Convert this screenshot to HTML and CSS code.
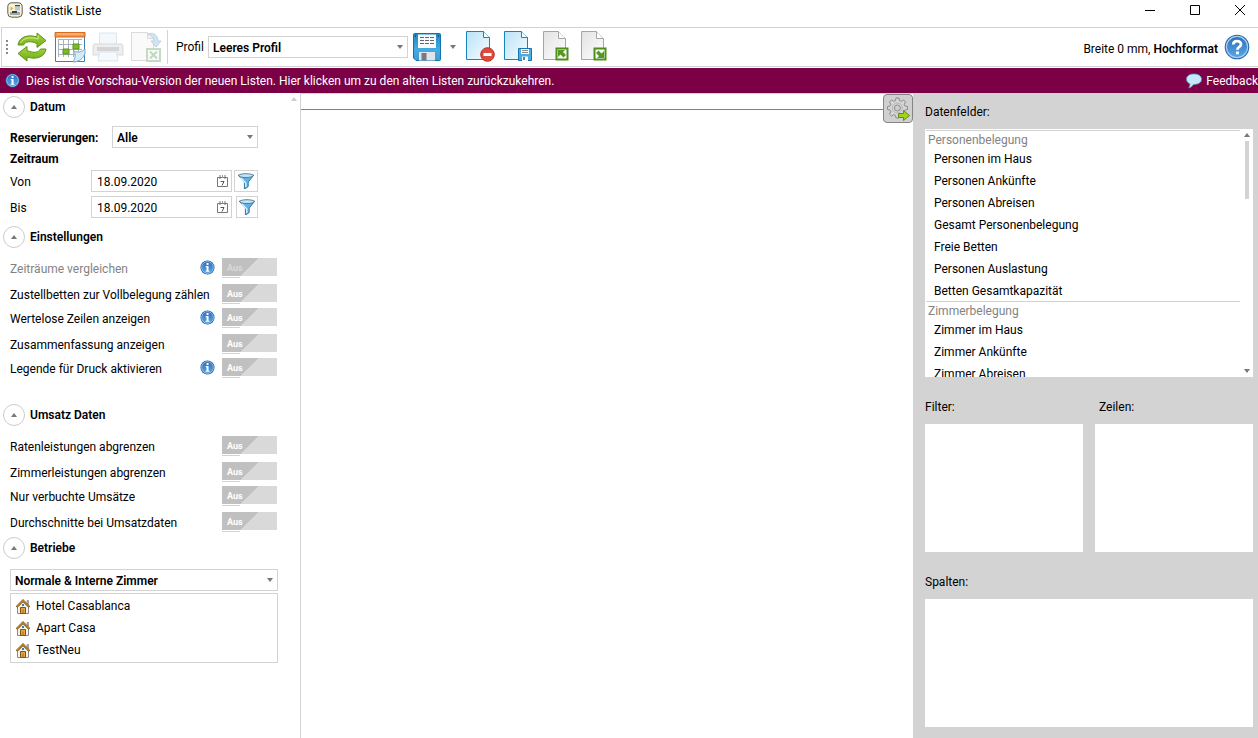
FILE: index.html
```html
<!DOCTYPE html>
<html lang="de">
<head>
<meta charset="utf-8">
<title>Statistik Liste</title>
<link rel="stylesheet" href="styles.css">
</head>
<body>
<svg class="defs" width="0" height="0" aria-hidden="true">
  <defs>
    <linearGradient id="gBlue" x1="0" y1="0" x2="0" y2="1"><stop offset="0" stop-color="#2c6fbc"/><stop offset="1" stop-color="#5aa6e4"/></linearGradient>
    <linearGradient id="gGreen" x1="0" y1="0" x2="0" y2="1"><stop offset="0" stop-color="#a8d444"/><stop offset="1" stop-color="#6fae12"/></linearGradient>
    <linearGradient id="gPage" x1="0" y1="0" x2="1" y2="1"><stop offset="0" stop-color="#b9e2f7"/><stop offset="1" stop-color="#f8fdff"/></linearGradient>
    <linearGradient id="gGrey" x1="0" y1="0" x2="1" y2="1"><stop offset="0" stop-color="#e2e2e2"/><stop offset="1" stop-color="#ffffff"/></linearGradient>
    <linearGradient id="gDisk" x1="0" y1="0" x2="0" y2="1"><stop offset="0" stop-color="#1d86c4"/><stop offset=".6" stop-color="#46abe2"/><stop offset="1" stop-color="#3d9cd6"/></linearGradient>
  </defs>
  <symbol id="info" viewBox="0 0 16 16"><circle cx="8" cy="8" r="7.5" fill="#1b5fae"/><circle cx="8" cy="8" r="6.3" fill="url(#gBlue)" stroke="#a9d0f2" stroke-width=".8"/><path d="M7 3.2h2.1v2H7zM6.1 6.4h3v5h1v1.2H6v-1.2h1V7.6h-.9z" fill="#fff"/></symbol>
  <symbol id="funnel" viewBox="0 0 16 16"><path d="M.3 2.2h15.400L10.200 9v4.600L6.400 16V9z" fill="#62b1e8" stroke="#2d77ab"/><path d="M2.500 4.500 7.800 10v4" fill="none" stroke="#e2f4ff" stroke-width="1.300"/><ellipse cx="8" cy="2.600" rx="7.300" ry="1.900" fill="#c3e6fb" stroke="#46637a" stroke-width=".8"/></symbol>
  <symbol id="cal" viewBox="0 0 11 12"><path d="M.5 2.5h10v9H.5zM3 0v4M8 0v4" fill="none" stroke="#777"/><path d="M5 0h1v3H5z" fill="#999"/><path d="M3.500 6.500h3.500L5 10.500" fill="none" stroke="#555"/></symbol>
  <symbol id="house" viewBox="0 0 14 15"><path d="M11 1.500h1.500v4H11z" fill="#b9b9b9" stroke="#777" stroke-width=".6"/><path d="M1.500 7v7.500h11V7L7 2z" fill="#f6f3ec" stroke="#8a8a8a"/><path d="M.6 8 7 1.600 13.400 8" fill="none" stroke="#7e5210" stroke-width="2.200"/><path d="M.8 7.600 7 1.500l6.200 6.100" fill="none" stroke="#e8aa42"/><path d="M4.500 14.500V8.500h5v6z" fill="#e2a44c" stroke="#87520a"/><path d="M6.500 10.500h1v4h-1z" fill="#a86a14"/><path d="M6 5h2v2H6z" fill="#2f7fc4"/></symbol>
  <symbol id="up" viewBox="0 0 6 4"><path d="M0 4h6L3 0z" fill="currentColor"/></symbol>
  <symbol id="down" viewBox="0 0 6 4"><path d="M0 0h6L3 4z" fill="currentColor"/></symbol>
  <symbol id="disk" viewBox="0 0 30 30"><path d="M2.500 1.500h25a1 1 0 0 1 1 1v25a1 1 0 0 1-1 1H4L1.500 26V2.500a1 1 0 0 1 1-1z" fill="url(#gDisk)" stroke="#1272ae"/><path d="M6 2.500h18V16H6z" fill="#f7fbfd"/><path d="M8 5.500h14M8 8.500h14M8 11.500h14" stroke="#666" stroke-dasharray="4 1"/><path d="M7 20h16v8.500H7z" fill="#dfe3ec"/><path d="M9.500 21h5v7.500h-5z" fill="#77797e"/><path d="M3.500 3v2M26.500 3v2" stroke="#0d5283"/></symbol>
</svg>

<header class="titlebar">
  <svg class="i16" viewBox="0 0 16 16"><rect x=".8" y=".8" width="14.400" height="14.400" rx="4" fill="#f8f3d8" stroke="#5d5d55" stroke-width="1"/><path d="M3 10h10v3H3z" fill="#aaa89c"/><path d="M8 3h5v1.500H8z" fill="#2f5468"/><path d="M8 4.500h5v4H8z" fill="#b2ccd5"/><path d="M3.500 4.500l3 2-3 2z" fill="#e0b62c"/><path d="M5 9h5v2H5z" fill="#284653"/></svg>
  <h1 class="title">Statistik Liste</h1>
  <div class="window-buttons">
    <button type="button" aria-label="Minimieren"><svg viewBox="0 0 10 10"><path d="M0 5.500h10"/></svg></button>
    <button type="button" aria-label="Maximieren"><svg viewBox="0 0 10 10"><path d="M.5.5h9v9h-9z"/></svg></button>
    <button type="button" aria-label="Schließen"><svg viewBox="0 0 10 10"><path d="M0 0l10 10M10 0L0 10"/></svg></button>
  </div>
</header>

<div class="toolbar">
  <svg class="grip" viewBox="0 0 2 14"><path d="M0 0h2v2H0zM0 4h2v2H0zM0 8h2v2H0zM0 12h2v2H0z" fill="#888"/></svg>
  <div class="tools">
    <button type="button" aria-label="Aktualisieren"><svg viewBox="0 0 32 32"><path d="M2 14C3 6 12 3 21 6V2l9 7.500-9 7V12.500C14 9.500 9 10.500 7.500 14z" fill="url(#gGreen)" stroke="#5e9413"/><path d="M30 18c-1 8-10 11-19 8v4l-9-7.500 9-7v4c7 3 12 2 13.500-1.500z" fill="url(#gGreen)" stroke="#5e9413"/><path d="M4.500 12C7 7 14 5.500 22 8V4.500" fill="none" stroke="#cdeb86"/></svg></button>
    <button type="button" aria-label="Kalender"><svg viewBox="0 0 32 32"><path d="M1.500 2h29v28.500h-29z" fill="#fff" stroke="#3d7fb4"/><path d="M1 1.500h30v4.500H1z" fill="#f2944a" stroke="#d66a20"/><path d="M3 3h26" stroke="#ffc898"/><path d="M4 8h24v18H4z" fill="#fff"/><path d="M4.500 8v18M9.500 8v18M14.500 8v18M19.500 8v18M24.500 8v18M4 8.500h24M4 13.500h24M4 18.500h24M4 23.500h24" stroke="#a6b4be"/><path d="M9 18h6v5H9zM19 13h6v5h-6z" fill="#7dbb25" stroke="#5a9314"/><path d="M19 31c2-3 3-8 1-11 4 2 8 1 11-2v4c-1 5-6 9-12 9z" fill="#d6ebf8" stroke="#7fa9c8"/></svg></button>
    <button type="button" aria-label="Drucken" disabled><svg viewBox="0 0 32 32"><path d="M7.500 2h17v14h-17z" fill="#e2eff8" stroke="#a9bfd0"/><path d="M3 13h26a2 2 0 0 1 2 2v9H1v-9a2 2 0 0 1 2-2z" fill="#d5d5d5" stroke="#a5a5a5"/><path d="M5 16h22v4H5z" fill="#979797"/><path d="M7.500 21h17l1.500 9H6z" fill="#e5f1f9" stroke="#a9bfd0"/></svg></button>
    <button type="button" aria-label="Excel-Export" disabled><svg viewBox="0 0 32 32"><path d="M1.500 1.500h16l6 6v22h-22z" fill="#f5f5f5" stroke="#a5a5a5"/><path d="M17.500 1.500v6h6" fill="#ddd" stroke="#a5a5a5"/><path d="M18 3c5-2 10 1 10 7h3l-5 6-5-6h3c0-4-3-6-6-7z" fill="#8bbfe4" stroke="#5a93bd"/><path d="M17 18h13v12H17z" fill="#f0f8ee" stroke="#6fa56d" stroke-width="2"/><path d="M20 20.500l7 7M27 20.500l-7 7" stroke="#5e9d5c" stroke-width="2"/></svg></button>
  </div>
  <div class="profile">
    <label for="profil">Profil</label>
    <div class="select-wrap profile-select"><select id="profil"><option>Leeres Profil</option></select><svg class="arrow"><use href="#down"/></svg></div>
  </div>
  <button class="save" type="button" aria-label="Profil speichern"><svg><use href="#disk"/></svg></button>
  <button class="more" type="button" aria-label="Weitere Optionen"><svg class="tri"><use href="#down"/></svg></button>
  <div class="tools">
    <button type="button" aria-label="Liste entfernen"><svg viewBox="0 0 32 32"><path d="M2.500 .5h17l6 6v22h-23z" fill="url(#gPage)" stroke="#1685bd"/><path d="M19.500 .5v6h6" fill="#fff" stroke="#1685bd"/><circle cx="23.500" cy="23.500" r="6.800" fill="#dc4b3e" stroke="#b62d26"/><path d="M19.500 22h8v3h-8z" fill="#fff"/></svg></button>
    <button type="button" aria-label="Liste speichern"><svg viewBox="0 0 32 32"><path d="M2.500 .5h17l6 6v22h-23z" fill="url(#gPage)" stroke="#1685bd"/><path d="M19.500 .5v6h6" fill="#fff" stroke="#1685bd"/><path d="M16.500 17.500h13v12h-13z" fill="#4dade0" stroke="#1774ae"/><path d="M19 18h8v5h-8zM20 25.500h6V30h-6z" fill="#f6fbfe"/><path d="M20 19.500h6M20 21.500h6" stroke="#888"/><path d="M21 26h2v3h-2z" fill="#6d7a86"/></svg></button>
    <button type="button" aria-label="Importieren"><svg viewBox="0 0 32 32"><path d="M3.500 .5h15l7 7v21h-22z" fill="url(#gGrey)" stroke="#a6a6a6"/><path d="M18.500 .5v7h7" fill="#fff" stroke="#a6a6a6"/><path d="M16.500 17.500h11v11h-11z" fill="#fff" stroke="#4c8f1b" stroke-width="2"/><path d="M18 19h7l-2 2 3 3-2.500 2.500-3-3L18 26z" fill="#55981f"/></svg></button>
    <button type="button" aria-label="Exportieren"><svg viewBox="0 0 32 32"><path d="M3.500 .5h15l7 7v21h-22z" fill="url(#gGrey)" stroke="#a6a6a6"/><path d="M18.500 .5v7h7" fill="#fff" stroke="#a6a6a6"/><path d="M16.500 17.500h11v11h-11z" fill="#fff" stroke="#4c8f1b" stroke-width="2"/><path d="M26 27h-7l2-2-3-3 2.500-2.500 3 3L26 20z" fill="#55981f"/></svg></button>
  </div>
  <p class="format">Breite 0 mm, <b>Hochformat</b></p>
  <button class="help" type="button" aria-label="Hilfe"><svg viewBox="0 0 26 26"><circle cx="13" cy="13" r="12.300" fill="#2466ac"/><circle cx="13" cy="13" r="10.600" fill="url(#gBlue)" stroke="#a9cff0" stroke-width="1.200"/><path d="M9.300 10.500C9.300 6 17 6 17 10.300c0 2.700-3.600 2.700-3.600 5.400" fill="none" stroke="#fff" stroke-width="2.800"/><path d="M12 17.500h2.900v2.800H12z" fill="#fff"/></svg></button>
</div>

<div class="notice">
  <svg class="i15"><use href="#info"/></svg>
  <a class="notice-text" href="#alt">Dies ist die Vorschau-Version der neuen Listen. Hier klicken um zu den alten Listen zurückzukehren.</a>
  <a class="feedback" href="#feedback"><svg class="i16" viewBox="0 0 16 16"><path d="M8 1C3.500 1 .5 3 .5 6.300c0 2.200 1.400 3.700 3.500 4.500 0 1.700-.5 3-1.200 4.200 2.200-.6 3.800-2 4.700-3.500 5 0 8-1.900 8-5.200S12.500 1 8 1z" fill="#c5e8fb" stroke="#5e9cc6" stroke-width=".8"/></svg>Feedback</a>
</div>

<main class="workspace">
  <aside class="settings">
    <svg class="tri settings-scroll"><use href="#up"/></svg>
    <section>
      <h2><button class="fold" type="button" aria-label="Datum einklappen"><svg class="tri"><use href="#up"/></svg></button>Datum</h2>
      <div class="date-form">
        <div class="reservations">
          <label for="res">Reservierungen:</label>
          <div class="select-wrap"><select id="res"><option>Alle</option></select><svg class="arrow"><use href="#down"/></svg></div>
        </div>
        <h3>Zeitraum</h3>
        <div class="date-row">
          <label for="von">Von</label>
          <div class="date-box"><input id="von" type="text" value="18.09.2020"><svg class="cal"><use href="#cal"/></svg></div>
          <button class="filter filter-wide" type="button" aria-label="Filter Von"><svg class="i16"><use href="#funnel"/></svg></button>
        </div>
        <div class="date-row">
          <label for="bis">Bis</label>
          <div class="date-box"><input id="bis" type="text" value="18.09.2020"><svg class="cal"><use href="#cal"/></svg></div>
          <button class="filter" type="button" aria-label="Filter Bis"><svg class="i16"><use href="#funnel"/></svg></button>
        </div>
      </div>
    </section>
    <section>
      <h2><button class="fold" type="button" aria-label="Einstellungen einklappen"><svg class="tri"><use href="#up"/></svg></button>Einstellungen</h2>
      <div class="options options-main">
        <label class="option off"><span class="name">Zeiträume vergleichen</span><svg class="i15"><use href="#info"/></svg><input type="checkbox" disabled><span class="switch"><span>Aus</span></span></label>
        <label class="option"><span class="name">Zustellbetten zur Vollbelegung zählen</span><input type="checkbox"><span class="switch"><span>Aus</span></span></label>
        <label class="option"><span class="name">Wertelose Zeilen anzeigen</span><svg class="i15"><use href="#info"/></svg><input type="checkbox"><span class="switch"><span>Aus</span></span></label>
        <label class="option"><span class="name">Zusammenfassung anzeigen</span><input type="checkbox"><span class="switch"><span>Aus</span></span></label>
        <label class="option"><span class="name">Legende für Druck aktivieren</span><svg class="i15"><use href="#info"/></svg><input type="checkbox"><span class="switch"><span>Aus</span></span></label>
      </div>
    </section>
    <section>
      <h2><button class="fold" type="button" aria-label="Umsatz Daten einklappen"><svg class="tri"><use href="#up"/></svg></button>Umsatz Daten</h2>
      <div class="options">
        <label class="option"><span class="name">Ratenleistungen abgrenzen</span><input type="checkbox"><span class="switch"><span>Aus</span></span></label>
        <label class="option"><span class="name">Zimmerleistungen abgrenzen</span><input type="checkbox"><span class="switch"><span>Aus</span></span></label>
        <label class="option"><span class="name">Nur verbuchte Umsätze</span><input type="checkbox"><span class="switch"><span>Aus</span></span></label>
        <label class="option"><span class="name">Durchschnitte bei Umsatzdaten</span><input type="checkbox"><span class="switch"><span>Aus</span></span></label>
      </div>
    </section>
    <section>
      <h2><button class="fold" type="button" aria-label="Betriebe einklappen"><svg class="tri"><use href="#up"/></svg></button>Betriebe</h2>
      <div class="hotels">
        <div class="select-wrap"><select aria-label="Betriebe"><option>Normale &amp; Interne Zimmer</option></select><svg class="arrow"><use href="#down"/></svg></div>
        <ul class="hotel-list">
          <li><svg class="house"><use href="#house"/></svg>Hotel Casablanca</li>
          <li><svg class="house"><use href="#house"/></svg>Apart Casa</li>
          <li><svg class="house"><use href="#house"/></svg>TestNeu</li>
        </ul>
      </div>
    </section>
  </aside>

  <section class="preview">
    <div class="ruler"></div>
    <button class="gear" type="button" aria-label="Datenfelder ausblenden"><svg viewBox="0 0 26 26"><path d="M11 2h3l.5 2.600 1.800.8 2.200-1.500 2.100 2.100-1.500 2.200.8 1.800 2.600.5v3l-2.600.5-.8 1.800 1.500 2.200-2.100 2.100-2.200-1.500-1.800.8L14 22h-3l-.5-2.600-1.800-.8-2.200 1.500L4.400 18l1.500-2.200-.8-1.800-2.600-.5v-3L5.100 10l.8-1.800L4.400 6l2.100-2.100 2.200 1.500 1.800-.8z" fill="#d6d6d6" stroke="#868686" stroke-width=".9"/><circle cx="12.400" cy="12" r="5" fill="none" stroke="#b5b5b5"/><circle cx="12.400" cy="12" r="3" fill="#cfcfcf" stroke="#868686" stroke-width=".9"/><path d="M13.500 17.500h5v-3l6 5-6 5v-3h-5z" fill="#a3d11d" stroke="#5f910e"/></svg></button>
  </section>

  <aside class="fields">
    <h4>Datenfelder:</h4>
    <div class="field-box">
      <div class="field-groups">
        <div class="group">
          <h5>Personenbelegung</h5>
          <ul><li>Personen im Haus</li><li>Personen Ankünfte</li><li>Personen Abreisen</li><li>Gesamt Personenbelegung</li><li>Freie Betten</li><li>Personen Auslastung</li><li>Betten Gesamtkapazität</li></ul>
        </div>
        <div class="group">
          <h5>Zimmerbelegung</h5>
          <ul><li>Zimmer im Haus</li><li>Zimmer Ankünfte</li><li>Zimmer Abreisen</li></ul>
        </div>
      </div>
      <div class="scrollbar"><svg class="tri"><use href="#up"/></svg><div class="thumb"></div><svg class="tri"><use href="#down"/></svg></div>
    </div>
    <div class="pair">
      <div class="area"><h4>Filter:</h4><div class="drop"></div></div>
      <div class="area"><h4 class="inset">Zeilen:</h4><div class="drop"></div></div>
    </div>
    <div class="area"><h4>Spalten:</h4><div class="drop"></div></div>
  </aside>
</main>
</body>
</html>
```
FILE: styles.css
```css
* { box-sizing: border-box; }
html, body { height: 100%; }
body {
  margin: 0;
  display: flex;
  flex-direction: column;
  overflow: hidden;
  background: #fff;
  color: #000;
  font: 12px/16px Roboto, "Open Sans", sans-serif;
}
h1, h2, h3, h4, h5, p, ul { margin: 0; padding: 0; font-size: 12px; }
ul { list-style: none; }
svg { display: block; flex: none; }
button { display: grid; place-items: center; margin: 0; padding: 0; border: 0; background: none; }
input, select { font: inherit; color: inherit; }
.defs { position: absolute; }
.i15 { width: 15px; height: 15px; }
.i16 { width: 16px; height: 16px; }
.tri { width: 6px; height: 4px; color: #777; }

.titlebar { display: flex; align-items: flex-start; flex: none; height: 27px; padding: 2px 8px 2px 7px; }
.title { flex: 1; margin-left: 6px; padding-top: 1px; font-weight: 400; }
.window-buttons { display: flex; gap: 25px; }
.window-buttons button { width: 20px; height: 16px; }
.window-buttons svg { width: 10px; height: 10px; fill: none; stroke: #000; overflow: visible; }

.toolbar {
  display: flex;
  align-items: center;
  flex: none;
  height: 40px;
  margin-left: 1px;
  padding: 0 8px 0 4px;
  border: 1px solid #d3d3d3;
  border-right: 0;
}
.grip { width: 2px; height: 14px; margin-right: 8px; }
.tools { display: flex; gap: 6px; }
.tools button, .tools svg { width: 32px; height: 32px; }
.tools button:disabled { opacity: .4; }
.profile {
  display: flex;
  align-items: center;
  justify-content: space-between;
  width: 241px;
  height: 34px;
  margin-left: 5px;
  padding-left: 8px;
  border-left: 1px solid #d3d3d3;
}
.profile-select { width: 200px; font-weight: 600; }
.save { margin-left: 4px; }
.save svg { width: 30px; height: 30px; }
.more { width: 22px; height: 30px; }
.format { margin-left: auto; margin-right: 6px; padding-top: 3px; }
.format b { font-weight: 600; }
.help svg { width: 26px; height: 26px; }

.select-wrap { position: relative; display: flex; }
.select-wrap select {
  appearance: none;
  width: 100%;
  height: 22px;
  margin: 0;
  padding: 1px 18px 0 4px;
  border: 1px solid #d3d3d3;
  border-radius: 0;
  background: #fff;
  color: #000;
}
.arrow { position: absolute; right: 5px; top: 9px; width: 6px; height: 4px; color: #777; }

.notice {
  display: flex;
  align-items: center;
  flex: none;
  height: 25px;
  margin-top: 1px;
  padding-left: 5px;
  background: #7b0046;
  color: #fff;
}
.notice a { color: #fff; text-decoration: none; white-space: nowrap; }
.notice-text { flex: 1; margin-left: 6px; }
.feedback { display: flex; align-items: center; gap: 4px; }

.workspace { display: flex; flex: 1; min-height: 0; }
.settings { position: relative; flex: none; width: 301px; padding-top: 3px; border-right: 1px solid #d3d3d3; }
.settings-scroll { position: absolute; top: 4px; right: 3px; color: #ccc; }
h2 { display: flex; align-items: center; gap: 5px; padding-left: 3px; line-height: 18px; font-weight: 600; }
.fold { width: 22px; height: 22px; border: 1px solid #ccc; border-radius: 50%; }

.date-form { display: grid; width: 258px; padding: 8px 0 8px 10px; }
.reservations { display: grid; grid-template-columns: 102px 1fr; align-items: center; font-weight: 600; }
.reservations label { padding-top: 1px; font-weight: 700; white-space: nowrap; }
h3 { line-height: 22px; font-weight: 700; }
.date-row { display: flex; align-items: center; }
.date-row + .date-row { margin-top: 4px; }
.date-row label { width: 81px; padding-top: 1px; }
.date-box { display: flex; align-items: center; width: 141px; height: 22px; padding-right: 3px; border: 1px solid #d3d3d3; }
.date-box input { flex: 1; min-width: 0; padding: 1px 5px 0; border: 0; background: none; outline: 0; }
.cal { width: 11px; height: 12px; }
.filter { width: 22px; height: 22px; margin-left: auto; border: 1px solid #d3d3d3; }
.filter-wide { width: 24px; }

.options { display: flex; flex-direction: column; width: 277px; padding: 9px 0 2px 10px; }
.options-main { padding-bottom: 23px; }
.option { display: flex; align-items: flex-start; height: 24px; white-space: nowrap; }
.option:nth-child(odd):not(:last-child) { margin-bottom: 2px; }
.name { flex: 1; line-height: 24px; }
.option .i15 { margin: 3px 7px 0 0; }
.option input { position: absolute; opacity: 0; }
.off .name { color: #838383; }
.switch {
  width: 55px;
  height: 20px;
  margin-top: 1px;
  background:
    linear-gradient(#d3d3d3, #d3d3d3) 0 19px / 18px 1px no-repeat,
    linear-gradient(135deg, #c0c0c0 26px, #d9d9d9 26px) 0 0 / 55px 18px no-repeat;
}
.switch span { display: block; margin-left: 5px; color: #fff; font-size: 9px; font-weight: 700; line-height: 20px; }
.off .switch span { color: #d9d9d9; }

.hotels { width: 278px; padding: 10px 0 0 10px; font-weight: 600; }
.hotel-list { margin-top: 2px; padding: 1px 5px; border: 1px solid #d3d3d3; font-weight: 400; }
.hotel-list li { display: flex; align-items: center; gap: 6px; height: 22px; }
.house { width: 14px; height: 15px; }

.preview { display: flex; flex: 1; align-items: flex-start; min-width: 0; border-top: 1px solid #d3d3d3; }
.ruler { flex: 1; height: 16px; border-bottom: 1px solid #26a0da; }
.gear { width: 30px; height: 29px; border: 1px solid #858585; border-radius: 4px; background: #d0d0d0; }
.gear svg { width: 26px; height: 26px; }

.fields { display: flex; flex: none; flex-direction: column; width: 345px; padding: 0 5px 11px 12px; background: #d3d3d3; }
h4 { flex: none; padding-top: 11px; height: 36px; font-weight: 400; }
.field-box { display: flex; flex: 248 0 0; min-height: 0; background: #fff; }
.field-groups { flex: 1; margin: 1px 0 0 1px; overflow: hidden; }
.group { border-top: 1px solid #d3d3d3; }
h5 { height: 16px; padding-left: 2px; color: #838383; font-weight: 400; line-height: 18px; }
.group li { height: 22px; padding-left: 8px; line-height: 24px; }
.scrollbar { display: flex; flex-direction: column; align-items: center; width: 6px; margin: 0 3px 0 4px; padding: 4px 0; }
.thumb { width: 4px; height: 58px; margin: 4px 0 auto; background: #d3d3d3; }
.pair { display: flex; gap: 12px; flex: 175 0 0; }
.area { display: flex; flex-direction: column; flex: 175 0 0; }
.area h4 { height: 47px; padding-top: 22px; }
.area .inset { padding-left: 4px; }
.drop { flex: 1; background: #fff; }
```
